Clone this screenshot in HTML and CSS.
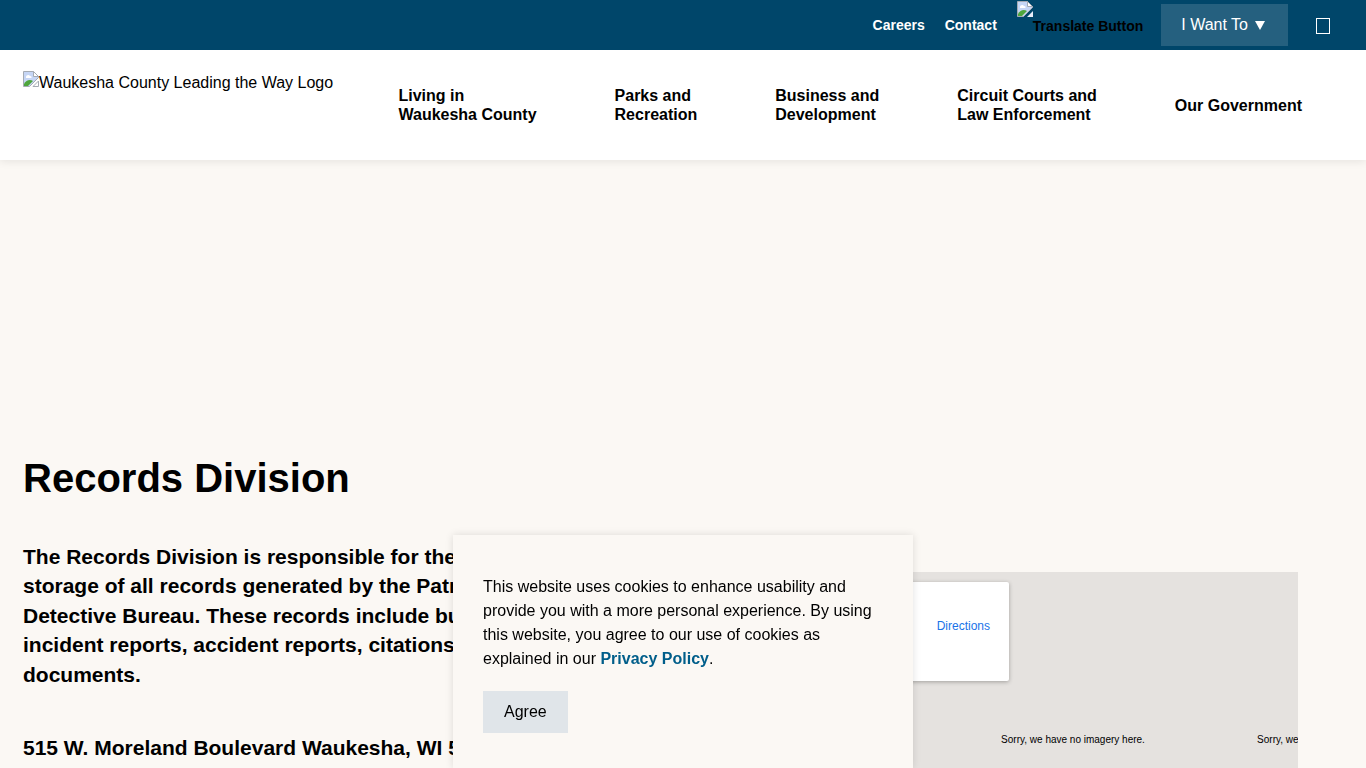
FILE: index.html
```html
<!DOCTYPE html>
<html lang="en">
  <head>
    <meta charset="UTF-8" />
    <meta name="viewport" content="width=device-width, initial-scale=1.0" />
    <title>Records Division</title>
    <link rel="stylesheet" href="styles.css">
  </head>
  <body>
    <header>
      <div class="topbar">
        <a href="#">Careers</a>
        <a href="#">Contact</a>
        <button type="button" class="translate">
          <svg class="broken" width="16" height="16" viewBox="0 0 16 16">
            <path d="M.5.5h10l5 5v1l-9 9h-6z" fill="#c6d6f5" stroke="#a5abb3" />
            <path d="M1 15v-2c2-4 6-5 9-3l-5 5z" fill="#4fa63c" />
            <path d="M3 6c0-2 3-3 4-1 2 0 2 2 1 2H3z" fill="#fff" />
            <path d="M10.500.5v5h5z" fill="#fff" stroke="#a5abb3" />
            <path d="M16 10v6h-6z" fill="#e8eefa" />
          </svg><span>Translate Button</span>
        </button>
        <button type="button" class="want">I Want To <span class="arrow"></span></button>
        <button type="button" class="search" aria-label="Search"><span></span></button>
      </div>
      <div class="navbar">
        <a href="#" class="logo">
          <svg class="broken" width="16" height="16" viewBox="0 0 16 16">
            <path d="M.5.5h10l5 5v1l-9 9h-6z" fill="#c6d6f5" stroke="#a5abb3" />
            <path d="M1 15v-2c2-4 6-5 9-3l-5 5z" fill="#4fa63c" />
            <path d="M3 6c0-2 3-3 4-1 2 0 2 2 1 2H3z" fill="#fff" />
            <path d="M10.500.5v5h5z" fill="#fff" stroke="#a5abb3" />
            <path d="M15.500 10v5.500h-5.500z" fill="#fff" stroke="#a5abb3" />
          </svg><span>Waukesha County Leading the Way Logo</span>
        </a>
        <nav>
          <a href="#">Living in<br />Waukesha County</a>
          <a href="#">Parks and<br />Recreation</a>
          <a href="#">Business and<br />Development</a>
          <a href="#">Circuit Courts and<br />Law Enforcement</a>
          <a href="#">Our Government</a>
        </nav>
      </div>
    </header>

    <main>
      <h1>Records Division</h1>
      <div class="columns">
        <div class="intro">
          <p>
            The Records Division is responsible for the maintenance and storage
            of all records generated by the Patrol Division and Detective
            Bureau. These records include but are not limited to incident
            reports, accident reports, citations, and various other documents.
          </p>
          <p>515 W. Moreland Boulevard Waukesha, WI 53188</p>
        </div>
        <div class="map">
          <!-- empty map tiles, cut off at the edge of the map -->
          <div class="tiles">
            <div>Sorry, we have no imagery here.</div>
            <div>Sorry, we have no imagery here.</div>
            <div>Sorry, we have no imagery here.</div>
          </div>
          <div class="place-card"><a href="#">Directions</a></div>
        </div>
      </div>
    </main>

    <div class="cookies">
      <p>
        This website uses cookies to enhance usability and provide you with a
        more personal experience. By using this website, you agree to our use
        of cookies as explained in our <a href="#">Privacy Policy</a>.
      </p>
      <button type="button">Agree</button>
    </div>
  </body>
</html>
```
FILE: styles.css
```css
* {
  box-sizing: border-box;
}

body {
  margin: 0;
  background-color: #fbf8f4;
  color: #000;
  font-family: "Liberation Sans", Arial, sans-serif;
  font-size: 16px;
  line-height: 24px;
}

a {
  color: inherit;
  text-decoration: none;
}

button {
  border: none;
  padding: 0;
  background: none;
  color: inherit;
  font: inherit;
  cursor: pointer;
}

header {
  position: relative;
  background-color: #fff;
  box-shadow: 0 2px 8px rgba(0, 0, 0, 0.08);
}

.topbar {
  display: flex;
  align-items: center;
  justify-content: flex-end;
  height: 50px;
  padding-right: 36px;
  background-color: #00466a;
  color: #fff;
  font-size: 14px;
  font-weight: bold;
}
.topbar a {
  margin-right: 20px;
}

.broken {
  flex: none;
}

.translate {
  display: flex;
  align-self: flex-start;
  margin-right: 18px;
  padding-top: 1px;
  color: #000;
}
.translate span {
  padding-top: 13px;
}

.want {
  display: flex;
  align-items: center;
  gap: 7px;
  height: 42px;
  margin-right: 28px;
  padding: 0 23px 0 20px;
  background-color: #25607f;
  font-size: 16px;
  font-weight: normal;
}
.arrow {
  border: 5px solid transparent;
  border-top: 9px solid #fff;
  border-bottom: none;
}

.search {
  display: flex;
  padding-top: 2px;
}
.search span {
  width: 14px;
  height: 16px;
  border: 1px solid #fff;
}

.navbar {
  display: flex;
  justify-content: space-between;
  min-height: 110px;
  padding: 0 64px 0 23px;
}

.logo {
  display: flex;
  padding-top: 21px;
}

nav {
  display: flex;
  align-items: center;
  gap: 78px;
  font-weight: bold;
  line-height: 19px;
}

main {
  padding: 294px 68px 40px 23px;
}

h1 {
  margin: 0 0 40px;
  font-size: 40px;
  line-height: 48px;
}

.columns {
  display: grid;
  grid-template-columns: 16fr 15fr;
  gap: 35px;
}

.intro {
  font-size: 21px;
  font-weight: bold;
  line-height: 1.4;
}
.intro p {
  margin: 0 0 44px;
}

.map {
  position: relative;
  height: 400px;
  margin-top: 30px;
  overflow: hidden;
  background-color: #e5e2df;
}

.tiles {
  position: absolute;
  top: 40px;
  left: -9px;
  display: flex;
}
.tiles div {
  display: flex;
  align-items: center;
  justify-content: center;
  width: 256px;
  height: 256px;
  font-size: 10px;
}

.place-card {
  position: absolute;
  top: 10px;
  left: 10px;
  width: 301px;
  height: 99px;
  padding: 32px 19px;
  border-radius: 2px;
  background-color: #fff;
  box-shadow: 0 1px 4px rgba(0, 0, 0, 0.3);
  color: #1a73e8;
  font-size: 12px;
  text-align: right;
}

.cookies {
  position: fixed;
  bottom: 0;
  left: 50%;
  width: 460px;
  margin-left: -230px;
  padding: 40px 30px 35px;
  background-color: #fbf8f4;
  box-shadow: 0 0 8px rgba(0, 0, 0, 0.12);
}
.cookies p {
  margin: 0 0 20px;
}
.cookies a {
  color: #005e8a;
  font-weight: bold;
}
.cookies button {
  display: block;
  height: 42px;
  padding: 0 21px;
  background-color: #e0e5e9;
}
```
